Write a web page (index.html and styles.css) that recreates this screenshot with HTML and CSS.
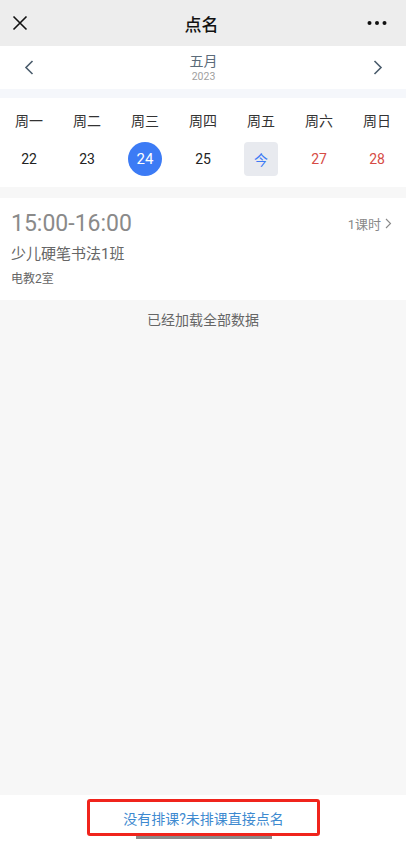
FILE: index.html
```html
<!DOCTYPE html>
<html lang="zh">
<head>
<meta charset="utf-8">
<title>点名</title>
<link rel="stylesheet" href="styles.css">
</head>
<body>
<div class="app">
  <header class="topbar">
    <svg class="close" width="16" height="16" viewBox="0 0 16 16"><path d="M1.5 1.5L14.5 14.5M14.5 1.5L1.5 14.5" stroke="#111" stroke-width="1.6" fill="none"/></svg>
    <div class="title">点名</div>
    <svg class="more" width="20" height="6" viewBox="0 0 20 6"><circle cx="2.5" cy="3" r="2" fill="#111"/><circle cx="10" cy="3" r="2" fill="#111"/><circle cx="17.5" cy="3" r="2" fill="#111"/></svg>
  </header>

  <nav class="monthnav">
    <svg class="chev" width="10" height="15" viewBox="0 0 10 15"><path d="M8.5 1L2 7.5L8.5 14" stroke="#4a5c6c" stroke-width="1.6" fill="none"/></svg>
    <div class="month">
      <div class="mname">五月</div>
      <div class="year">2023</div>
    </div>
    <svg class="chev" width="10" height="15" viewBox="0 0 10 15"><path d="M1.5 1L8 7.5L1.5 14" stroke="#4a5c6c" stroke-width="1.6" fill="none"/></svg>
  </nav>

  <section class="week">
    <div class="row labels">
      <span>周一</span><span>周二</span><span>周三</span><span>周四</span><span>周五</span><span>周六</span><span>周日</span>
    </div>
    <div class="row days">
      <span class="day">22</span>
      <span class="day">23</span>
      <span class="day"><b class="sel">24</b></span>
      <span class="day">25</span>
      <span class="day"><b class="today">今</b></span>
      <span class="day weekend">27</span>
      <span class="day weekend">28</span>
    </div>
  </section>

  <main class="list">
    <article class="card">
      <div class="card-top">
        <div class="time">15:00-16:00</div>
        <div class="hours">1课时<svg width="7" height="11" viewBox="0 0 7 11"><path d="M1 1L5.5 5.5L1 10" stroke="#888" stroke-width="1.1" fill="none"/></svg></div>
      </div>
      <div class="cls">少儿硬笔书法1班</div>
      <div class="room">电教2室</div>
    </article>
    <div class="end">已经加载全部数据</div>
  </main>

  <footer class="bottom">
    <div class="direct">没有排课?未排课直接点名</div>
    <div class="homebar"></div>
  </footer>
</div>
</body>
</html>
```

FILE: styles.css
```css
* { box-sizing: border-box; }
html, body { margin: 0; padding: 0; }
body {
  font-family: Roboto, "Noto Sans CJK SC", sans-serif;
  background: #f7f7f7;
  color: #333;
}
.app {
  width: 406px;
  height: 850px;
  display: flex;
  flex-direction: column;
  overflow: hidden;
}
.topbar {
  height: 46px;
  background: #ededed;
  display: flex;
  align-items: center;
  justify-content: space-between;
  padding: 0 19px 0 12px;
}
.title {
  font-size: 17px;
  font-weight: 500;
  color: #111;
  margin-left: 8px;
}
.monthnav {
  height: 43px;
  background: #fff;
  display: flex;
  align-items: center;
  justify-content: space-between;
  padding: 0 23px 0 24px;
}
.month {
  display: flex;
  flex-direction: column;
  align-items: center;
  padding-top: 2px;
}
.mname {
  font-size: 14px;
  line-height: 17px;
  color: #5b6b79;
}
.year {
  font-size: 10.5px;
  line-height: 14px;
  color: #a0a0a0;
}
.week {
  margin-top: 9px;
  background: #fff;
  padding: 0 0 11px;
  box-shadow: 0 -9px 0 #f5f7fb;
}
.row {
  display: grid;
  grid-template-columns: repeat(7, 1fr);
  text-align: center;
}
.labels {
  height: 44px;
  align-items: center;
  font-size: 14px;
  color: #333;
}
.days {
  height: 34px;
  align-items: center;
  font-size: 14px;
  color: #222;
}
.day {
  display: flex;
  justify-content: center;
  align-items: center;
}
.sel, .today {
  width: 34px;
  height: 34px;
  display: flex;
  align-items: center;
  justify-content: center;
  font-weight: normal;
}
.sel {
  border-radius: 50%;
  background: #3c7bf5;
  color: #fff;
  font-size: 15px;
}
.today {
  border-radius: 4px;
  background: #e8eaef;
  color: #3c7bf5;
  font-size: 14px;
}
.weekend { color: #d64b45; }
.list {
  flex: 1;
  padding-top: 11px;
  background: #f7f7f7;
}
.card {
  background: #fff;
  height: 102px;
  padding: 11px 14px 0 11px;
}
.card-top {
  display: flex;
  justify-content: space-between;
  align-items: center;
}
.time {
  font-size: 23px;
  line-height: 30px;
  color: #8a8a8a;
}
.hours {
  font-size: 13px;
  color: #888;
  display: flex;
  align-items: center;
  gap: 4px;
  margin-top: -1px;
}
.cls {
  font-size: 15px;
  line-height: 22px;
  color: #666;
  margin-top: 4px;
}
.room {
  font-size: 12px;
  line-height: 18px;
  color: #666;
  margin-top: 5px;
}
.end {
  text-align: center;
  font-size: 14px;
  line-height: 20px;
  color: #666;
  margin-top: 10px;
}
.bottom {
  height: 55px;
  background: #fff;
  display: flex;
  flex-direction: column;
  align-items: center;
  padding-top: 4px;
}
.direct {
  width: 233px;
  height: 37px;
  border: 3px solid #f0241c;
  border-radius: 3px;
  display: flex;
  align-items: center;
  justify-content: center;
  font-size: 14px;
  color: #3e8ad0;
  margin-left: 1px;
}
.homebar {
  width: 136px;
  height: 3px;
  background: #8a8a8a;
  margin-left: 1px;
}
```
